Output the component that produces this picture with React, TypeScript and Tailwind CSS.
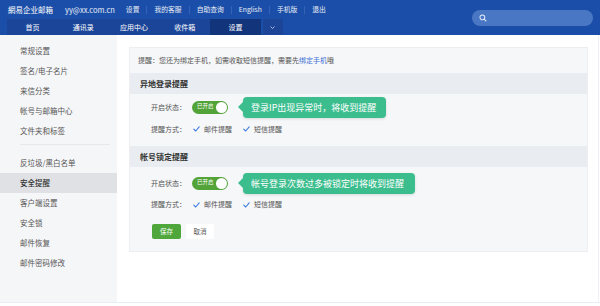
import React from "react";

function Check() {
  return (
    <svg width="7" height="6" viewBox="0 0 7 6" className="shrink-0">
      <path d="M0.8 3.2 L2.7 5 L6.2 0.8" fill="none" stroke="#3b7be0" strokeWidth="1.1" strokeLinecap="round" strokeLinejoin="round" />
    </svg>
  );
}

function Toggle() {
  return (
    <div className="w-[36px] h-[13px] rounded-full bg-[#52a338] flex items-center justify-between pl-[5px] pr-[1px]">
      <span className="text-[5.5px] leading-none text-white">已开启</span>
      <span className="w-[11px] h-[11px] rounded-full bg-white" />
    </div>
  );
}

function Tip({ text, w }: { text: string; w: string }) {
  return (
    <div className={`relative ml-[15px] h-[21px] ${w} rounded-[4px] bg-[#3cbd8d] flex items-center pl-[8px] text-[9px] text-white leading-none shadow-[0_1px_3px_rgba(0,0,0,0.12)]`}>
      <span className="absolute left-[-5px] top-[5.5px] w-0 h-0 border-y-[5px] border-y-transparent border-r-[5px] border-r-[#3cbd8d]" />
      {text}
    </div>
  );
}

function Section({ title, tip, tipW, first }: { title: string; tip: string; tipW: string; first?: boolean }) {
  return (
    <>
      <div className="h-[21px] bg-[#e9ecf0] pl-[10px] flex items-center text-[8px] font-bold text-[#333]">{title}</div>
      <div className={`${first ? "pt-[2px]" : "pt-[5px]"} pl-[21px]`}>
        <div className="h-[22px] flex items-center">
          <span className="w-[41px] text-[7px] text-[#555]">开启状态：</span>
          <Toggle />
          <Tip text={tip} w={tipW} />
        </div>
        <div className={`${first ? "h-[22px]" : "h-[21px]"} flex items-center text-[7px] text-[#555]`}>
          <span className="w-[42px]">提醒方式：</span>
          <Check />
          <span className="ml-[4px]">邮件提醒</span>
          <span className="ml-[11px]"><Check /></span>
          <span className="ml-[4px]">短信提醒</span>
        </div>
      </div>
    </>
  );
}

export default function App() {
  const links = ["设置", "我的客服", "自助查询", "English", "手机版", "退出"];
  const tabs = ["首页", "通讯录", "应用中心", "收件箱", "设置"];
  const side1 = ["常规设置", "签名/电子名片", "来信分类", "帐号与邮箱中心", "文件夹和标签"];
  const side2 = ["反垃圾/黑白名单", "安全提醒", "客户端设置", "安全锁", "邮件恢复", "邮件密码修改"];
  return (
    <div className="w-[600px] h-[306px] bg-white overflow-hidden font-['Noto_Sans_CJK_SC','Noto_Sans',sans-serif]">
      {/* header */}
      <div className="h-[35px] bg-[#1b4ea8] flex items-center justify-between">
        <div className="flex flex-col self-stretch">
          <div className="h-[19px] flex items-center pl-[8px] text-[6.8px] text-white/90">
            <span className="text-[7.5px] text-white">網易企业邮箱</span>
            <span className="ml-[12px] text-[7.5px]">yy@xx.com.cn</span>
            <span className="ml-[4px]" />
            {links.map((l, i) => (
              <React.Fragment key={l}>
                <span className="px-[7px]">{l}</span>
                {i < links.length - 1 && <span className="w-px h-[8px] bg-[#3563b6]" />}
              </React.Fragment>
            ))}
          </div>
          <div className="h-[16px] flex pl-[7px]">
            <div className="flex bg-[#1a4599]">
              {tabs.map((t, i) => (
                <div
                  key={t}
                  className={`w-[50.8px] flex items-center justify-center text-[7px] text-white ${i === 4 ? "bg-[#12347a]" : ""}`}
                >
                  {t}
                </div>
              ))}
            </div>
            <div className="ml-[2px] w-[20px] bg-[#1d4597] flex items-center justify-center">
              <svg width="5" height="3" viewBox="0 0 5 3">
                <path d="M0.5 0.5 L2.5 2.5 L4.5 0.5" fill="none" stroke="#c8d4ee" strokeWidth="0.8" />
              </svg>
            </div>
          </div>
        </div>
        <div className="mr-[7px] mt-[1px] w-[121px] h-[16px] rounded-full bg-[#4a77c3] flex items-center pl-[7px]">
          <svg width="8" height="8" viewBox="0 0 10 10">
            <circle cx="4.2" cy="4.2" r="3" fill="none" stroke="#e6ecf8" strokeWidth="1.3" />
            <path d="M6.5 6.5 L8.8 8.8" stroke="#e6ecf8" strokeWidth="1.3" strokeLinecap="round" />
          </svg>
        </div>
      </div>

      {/* body */}
      <div className="flex h-[268px] border-b border-[#e6edf7]">
        <div className="w-[117px] bg-[#f5f6f8] pt-[6px] text-[7.5px] text-[#555]">
          {side1.map((s) => (
            <div key={s} className="h-[20px] pl-[20px] flex items-center">{s}</div>
          ))}
          <div className="mt-[3px] ml-[20px] w-[90px] h-px bg-[#e6e8eb]" />
          <div className="h-[8px]" />
          {side2.map((s) => (
            <div
              key={s}
              className={`h-[20px] pl-[20px] flex items-center ${s === "安全提醒" ? "bg-[#dfe1e5] text-[#333] font-medium" : ""}`}
            >
              {s}
            </div>
          ))}
        </div>
        <div className="flex-1 pl-[12px] pt-[12px] border-r border-[#eef1f5] mr-[1px]">
          <div className="w-[459px] bg-[#f6f7f9] border border-[#eceef1] pb-[12px]">
            <div className="h-[25px] pl-[8px] flex items-center text-[7px] text-[#555]">
              提醒：您还为绑定手机，如需收取短信提醒，需要先<span className="text-[#3b6fd6]">绑定手机</span>哦
            </div>
            <Section title="异地登录提醒" tip="登录IP出现异常时，将收到提醒" tipW="w-[143px]" first />
            <div className="h-[6px]" />
            <Section title="帐号锁定提醒" tip="帐号登录次数过多被锁定时将收到提醒" tipW="w-[172px]" />
            <div className="mt-[9px] pl-[22px] flex gap-[5px]">
              <div className="w-[29px] h-[15px] rounded-[2px] bg-[#4fa73c] text-white text-[6.5px] flex items-center justify-center">保存</div>
              <div className="w-[28px] h-[15px] rounded-[2px] bg-white text-[#555] text-[6.5px] flex items-center justify-center">取消</div>
            </div>
          </div>
        </div>
      </div>
    </div>
  );
}
